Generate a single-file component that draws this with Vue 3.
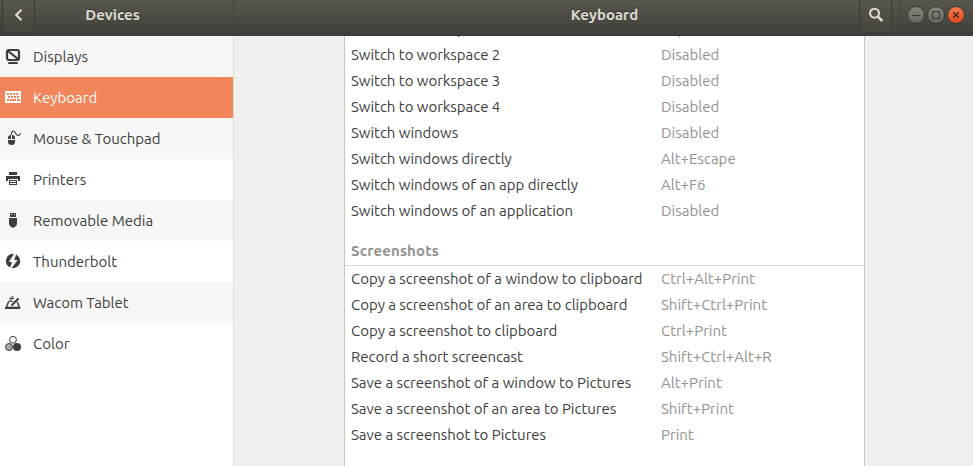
<script setup>
const devices = [
  { name: 'Displays', icon: 'display' },
  { name: 'Keyboard', icon: 'keyboard' },
  { name: 'Mouse & Touchpad', icon: 'mouse' },
  { name: 'Printers', icon: 'printer' },
  { name: 'Removable Media', icon: 'usb' },
  { name: 'Thunderbolt', icon: 'bolt' },
  { name: 'Wacom Tablet', icon: 'tablet' },
  { name: 'Color', icon: 'color' },
]
const navigation = [
  ['Switch to workspace 1', 'Super+Home'],
  ['Switch to workspace 2', 'Disabled'],
  ['Switch to workspace 3', 'Disabled'],
  ['Switch to workspace 4', 'Disabled'],
  ['Switch windows', 'Disabled'],
  ['Switch windows directly', 'Alt+Escape'],
  ['Switch windows of an app directly', 'Alt+F6'],
  ['Switch windows of an application', 'Disabled'],
]
const screenshots = [
  ['Copy a screenshot of a window to clipboard', 'Ctrl+Alt+Print'],
  ['Copy a screenshot of an area to clipboard', 'Shift+Ctrl+Print'],
  ['Copy a screenshot to clipboard', 'Ctrl+Print'],
  ['Record a short screencast', 'Shift+Ctrl+Alt+R'],
  ['Save a screenshot of a window to Pictures', 'Alt+Print'],
  ['Save a screenshot of an area to Pictures', 'Shift+Print'],
  ['Save a screenshot to Pictures', 'Print'],
]
</script>

<template>
  <div class="window">
    <header class="titlebar">
      <div class="bar-left">
        <button class="tool back" aria-label="Back">
          <svg width="10" height="14" viewBox="0 0 10 14"><path d="M7.5 1.7 2.2 7l5.3 5.3" fill="none" stroke="#dfdbd2" stroke-width="2.1" /></svg>
        </button>
        <h1 class="devices-title">Devices</h1>
      </div>
      <h1 class="page-title">Keyboard</h1>
      <button class="tool search" aria-label="Search">
        <svg width="16" height="16" viewBox="0 0 16 16" fill="none" stroke="#dfdbd2"><circle cx="6.5" cy="6.2" r="4.5" stroke-width="2.1" /><path d="m9.7 9.5 4.6 4.5" stroke-width="2.5" /></svg>
      </button>
      <div class="controls">
        <button class="control" aria-label="Minimize"><svg width="16" height="16"><path d="M4 8.5h8" stroke="#3c3b37" /></svg></button>
        <button class="control" aria-label="Maximize"><svg width="16" height="16"><path d="M4.5 4.5h7v7h-7z" fill="none" stroke="#3c3b37" /></svg></button>
        <button class="control close" aria-label="Close"><svg width="16" height="16"><path d="m5.2 5.2 5.6 5.6m0-5.6-5.6 5.6" stroke="#3c2a20" stroke-width="1.3" /></svg></button>
      </div>
    </header>
    <div class="body">
      <nav class="sidebar">
        <a v-for="d in devices" :key="d.name" class="device" :class="{ active: d.icon === 'keyboard' }">
          <svg class="icon" width="16" height="16" viewBox="0 0 16 16">
            <g v-if="d.icon === 'display'">
              <rect x="2" y="2" width="12" height="10" rx="2" fill="none" stroke="currentColor" stroke-width="2.2" />
              <path d="m3 3 10 8" stroke="currentColor" stroke-width="2.200" />
              <path d="M3 16c0-1.400.8-2 2-2h6c1.200 0 2 .6 2 2z" fill="currentColor" />
            </g>
            <g v-else-if="d.icon === 'keyboard'">
              <path d="M0 2h16v12H0z" fill="currentColor" />
              <path d="M2 5h2m1 0h2m1 0h2m1 0h2M3 8h2m1 0h2m1 0h2m1 0h2M2 11h2m1 0h6m1 0h3" stroke="#f28559" stroke-width="2" />
            </g>
            <g v-else-if="d.icon === 'mouse'">
              <path d="M3 9V7.500Q3 5 6 5v4zM7 5q3 0 3 2.500V9H7zM3 10h7v2q0 3-3.500 3T3 12z" fill="currentColor" />
              <path d="M6.500 5C6 1.500 7.500.5 9 1.300s1.500 3.500 3.500 4S15 4.500 15.300 3" fill="none" stroke="currentColor" stroke-width="1.100" />
            </g>
            <g v-else-if="d.icon === 'printer'" fill="currentColor">
              <path d="M4 1h8v3H4zM1 5h14v5h-2V8H3v2H1zM4 9h8v5H4z" />
              <path d="M5 10.500h6m-6 2h6" stroke="#fff" />
            </g>
            <g v-else-if="d.icon === 'usb'">
              <path d="M5 1h6v4H5zM4 6h8v5.500Q12 14 8 16 4 14 4 11.500z" fill="currentColor" />
              <path d="M6 2h1v1H6zm3 0h1v1H9z" fill="#f7f7f7" />
            </g>
            <g v-else-if="d.icon === 'bolt'">
              <circle cx="8" cy="8" r="7.200" fill="currentColor" />
              <path d="M9.500 0 3.800 9H7l-2.300 7H6l6.700-9H9.300L11.500 0z" fill="#fff" />
            </g>
            <g v-else-if="d.icon === 'tablet'">
              <path d="M3.500 8 1.200 13.500h13.300L12.200 8" fill="none" stroke="currentColor" stroke-width="1.500" />
              <path d="M0 13h15v2H0z" fill="currentColor" />
              <path d="m6.500 11.500 7-7" stroke="currentColor" stroke-width="1.900" />
              <path d="M8.500 1.800 4.500 4.600l4.500-.6L3.500 7.500H8" fill="none" stroke="currentColor" stroke-width=".9" />
            </g>
            <g v-else>
              <circle cx="8" cy="4.800" r="3.400" fill="#fff" stroke="currentColor" />
              <circle cx="4" cy="12" r="3.500" fill="#aaa" stroke="currentColor" />
              <circle cx="12" cy="12" r="4" fill="currentColor" />
            </g>
          </svg>
          <span>{{ d.name }}</span>
        </a>
      </nav>
      <main class="content">
        <section class="shortcuts">
          <div v-for="s in navigation" :key="s[0]" class="row"><span class="action">{{ s[0] }}</span><span class="keys">{{ s[1] }}</span></div>
          <h2>Screenshots</h2>
          <div v-for="s in screenshots" :key="s[0]" class="row"><span class="action">{{ s[0] }}</span><span class="keys">{{ s[1] }}</span></div>
        </section>
      </main>
    </div>
  </div>
</template>

<style>
body { overflow: hidden; }
</style>
<style scoped>
* { box-sizing: border-box; }
.window { width: 973px; height: 466px; display: flex; flex-direction: column; overflow: hidden; font: 15px/20px Ubuntu, "Noto Sans", sans-serif; color: #3d3d3d; }
.titlebar { height: 36px; flex: none; display: flex; background: linear-gradient(#59564e, #403f3a); border-bottom: 1px solid #383733; color: #dfdbd2; text-shadow: 0 -1px rgba(0,0,0,.4); }
.bar-left { width: 234px; display: flex; border-right: 1px solid #45433d; }
h1 { margin: 0; font-size: 15px; font-weight: 700; line-height: 30px; text-align: center; }
.devices-title { width: 155px; }
.page-title { flex: 1; padding-left: 116px; }
button { padding: 0; display: flex; align-items: center; justify-content: center; }
.tool { width: 33px; height: 33px; border: 1px solid #3b3934; border-top: 0; border-radius: 0 0 5px 5px; background: linear-gradient(#58554d, #46443e); box-shadow: inset 0 -1px #504e47; }
.back { margin-left: 2px; padding-bottom: 3px; }
.search { padding-bottom: 3px; }
.controls { display: flex; gap: 2px; margin-left: 8px; padding: 6px 8px 0 6px; border-left: 1px solid #46443e; }
.control { width: 18px; height: 18px; border: 1px solid #3a3934; border-radius: 50%; background: linear-gradient(#85837c, #65645e); }
.control svg { flex: none; }
.close { background: linear-gradient(#f67b51, #df4b1b); }
.body { flex: 1; min-height: 0; display: flex; }
.sidebar { width: 234px; flex: none; background: #fff; border-right: 1px solid #dededd; }
.device { height: 41px; display: flex; align-items: center; gap: 12px; padding-left: 5px; }
.device:nth-child(odd) { background: #f7f7f7; }
.device.active { background: #f28559; color: #fff; }
.icon { flex: none; margin-bottom: 1px; }
.content { flex: 1; padding-left: 110px; background: #f1f0ee; overflow: hidden; }
.shortcuts { width: 521px; height: 480px; margin-top: -20px; background: #fff; border: solid #c9c6c2; border-width: 0 1px; }
.row { height: 26px; display: grid; grid-template-columns: 310px 1fr; align-items: center; padding-left: 6px; white-space: nowrap; }
.action { letter-spacing: -.025px; }
.keys { color: #929292; }
h2 { height: 42px; margin: 0; padding: 17px 6px 0; border-bottom: 1px solid #dcdbda; color: #929292; font-size: 15px; line-height: 20px; letter-spacing: .15px; }
</style>
